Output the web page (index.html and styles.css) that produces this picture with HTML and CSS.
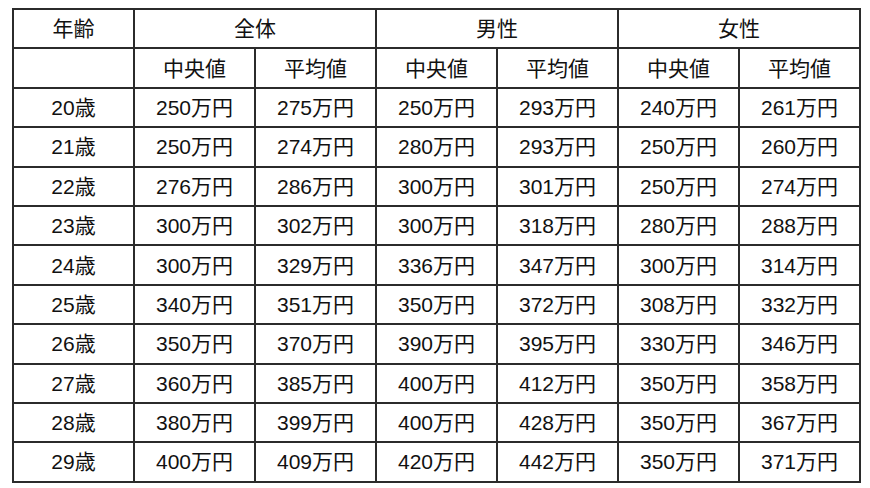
FILE: index.html
```html
<!DOCTYPE html>
<html lang="ja">
<head>
<meta charset="utf-8">
<link rel="stylesheet" href="styles.css">
</head>
<body>
<table class="salary">
  <colgroup>
    <col><col><col><col><col><col><col>
  </colgroup>
  <thead>
    <tr><th>年齢</th><th colspan="2">全体</th><th colspan="2">男性</th><th colspan="2">女性</th></tr>
    <tr><th></th><th>中央値</th><th>平均値</th><th>中央値</th><th>平均値</th><th>中央値</th><th>平均値</th></tr>
  </thead>
  <tbody>
    <tr><td>20歳</td><td>250万円</td><td>275万円</td><td>250万円</td><td>293万円</td><td>240万円</td><td>261万円</td></tr>
    <tr><td>21歳</td><td>250万円</td><td>274万円</td><td>280万円</td><td>293万円</td><td>250万円</td><td>260万円</td></tr>
    <tr><td>22歳</td><td>276万円</td><td>286万円</td><td>300万円</td><td>301万円</td><td>250万円</td><td>274万円</td></tr>
    <tr><td>23歳</td><td>300万円</td><td>302万円</td><td>300万円</td><td>318万円</td><td>280万円</td><td>288万円</td></tr>
    <tr><td>24歳</td><td>300万円</td><td>329万円</td><td>336万円</td><td>347万円</td><td>300万円</td><td>314万円</td></tr>
    <tr><td>25歳</td><td>340万円</td><td>351万円</td><td>350万円</td><td>372万円</td><td>308万円</td><td>332万円</td></tr>
    <tr><td>26歳</td><td>350万円</td><td>370万円</td><td>390万円</td><td>395万円</td><td>330万円</td><td>346万円</td></tr>
    <tr><td>27歳</td><td>360万円</td><td>385万円</td><td>400万円</td><td>412万円</td><td>350万円</td><td>358万円</td></tr>
    <tr><td>28歳</td><td>380万円</td><td>399万円</td><td>400万円</td><td>428万円</td><td>350万円</td><td>367万円</td></tr>
    <tr><td>29歳</td><td>400万円</td><td>409万円</td><td>420万円</td><td>442万円</td><td>350万円</td><td>371万円</td></tr>
  </tbody>
</table>
</body>
</html>
```

FILE: styles.css
```css
html, body {
  margin: 0;
  padding: 0;
  background: #ffffff;
}
body {
  padding: 8px 0 0 12px;
  font-family: "Liberation Sans", "Noto Sans CJK JP", sans-serif;
  color: #111111;
}
.salary {
  border-collapse: collapse;
  table-layout: fixed;
  width: 849px;
  border: 2px solid #2b2b2b;
}
.salary tr {
  height: 39.4px;
}
.salary th,
.salary td {
  border: 2px solid #2b2b2b;
  padding: 0;
  text-align: center;
  vertical-align: middle;
  font-size: 21px;
  font-weight: normal;
  line-height: 1;
}
```
